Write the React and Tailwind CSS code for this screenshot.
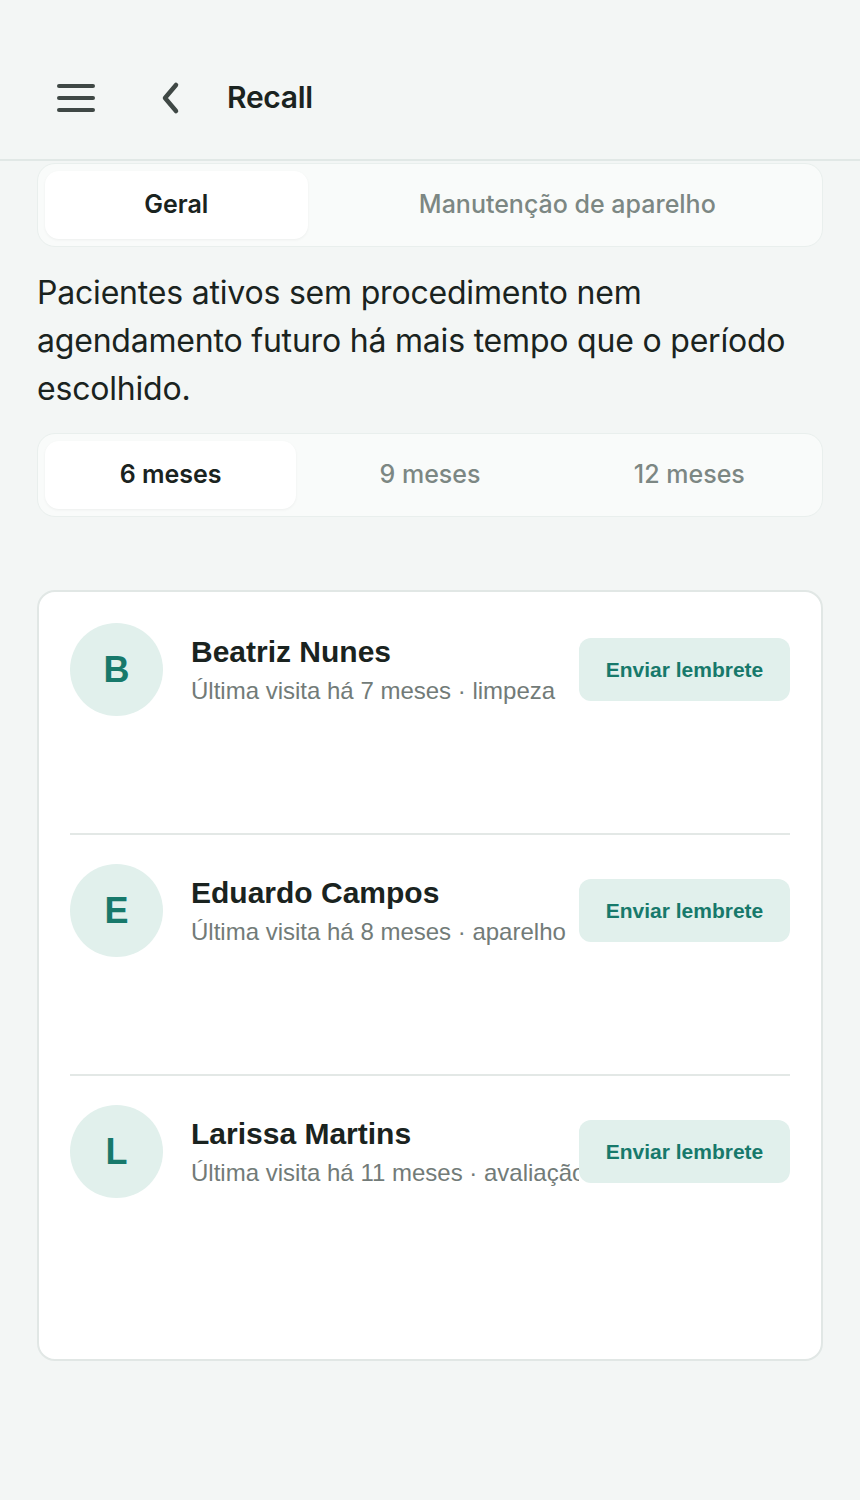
import { useState } from "react"

const patients = [
  { initial: "B", name: "Beatriz Nunes", info: "Última visita há 7 meses · limpeza" },
  { initial: "E", name: "Eduardo Campos", info: "Última visita há 8 meses · aparelho" },
  { initial: "L", name: "Larissa Martins", info: "Última visita há 11 meses · avaliação" },
]

export default function App() {
  const [tab, setTab] = useState("geral")
  const [period, setPeriod] = useState(6)

  return (
    <div className="min-h-[1500px] bg-[#f3f6f5] font-['Inter',sans-serif] text-[#1a2320]">
      <header className="h-[161px] flex items-center px-[57px] pt-[36px] border-b-2 border-[#e1e8e6]">
        <button className="w-[38px] h-[28px] flex flex-col justify-between">
          <span className="block h-[4px] rounded-full bg-[#3f4845]" />
          <span className="block h-[4px] rounded-full bg-[#3f4845]" />
          <span className="block h-[4px] rounded-full bg-[#3f4845]" />
        </button>
        <button className="ml-[66px]">
          <svg width="20" height="34" viewBox="0 0 20 34" fill="none">
            <path d="M15 4 L4 17 L15 30" stroke="#3f4845" strokeWidth="4.5" strokeLinecap="round" strokeLinejoin="round" />
          </svg>
        </button>
        <h1 className="ml-[46px] text-[30px] font-semibold tracking-[-0.3px] text-[#1a2320]">Recall</h1>
      </header>

      <div className="px-[37px]">
        <div className="mt-[2px] flex gap-3 p-[7px] rounded-[18px] bg-[#f9fbfa] border border-[#e9efed]">
          {[["geral", "Geral"], ["manut", "Manutenção de aparelho"]].map(([k, label]) => (
            <button
              key={k}
              onClick={() => setTab(k)}
              className={`flex-auto h-[68px] rounded-[14px] text-[25px] ${
                tab === k ? "bg-white font-semibold text-[#1a2320] shadow-[0_1px_3px_rgba(0,0,0,0.05)]" : "font-medium text-[#7c8783]"
              }`}
            >
              {label}
            </button>
          ))}
        </div>

        <p className="mt-[22px] text-[32px] leading-[48px] text-[#1a2320] tracking-[-0.2px]">
          Pacientes ativos sem procedimento nem agendamento futuro há mais tempo que o período escolhido.
        </p>

        <div className="mt-[20px] flex gap-2 p-[7px] rounded-[18px] bg-[#f9fbfa] border border-[#e9efed]">
          {[6, 9, 12].map((m) => (
            <button
              key={m}
              onClick={() => setPeriod(m)}
              className={`flex-1 h-[68px] rounded-[14px] text-[25px] ${
                period === m ? "bg-white font-semibold text-[#1a2320] shadow-[0_1px_3px_rgba(0,0,0,0.05)]" : "font-medium text-[#7c8783]"
              }`}
            >
              {m} meses
            </button>
          ))}
        </div>

        <div className="mt-[73px] bg-white rounded-[18px] border-2 border-[#e1e7e5] px-[31px] pb-[44px] font-['Liberation_Sans',Arial,sans-serif]">
          {patients.map((p, i) => (
            <div key={p.name} className={`h-[241px] ${i > 0 ? "pt-[29px] border-t-2 border-[#e3e8e6]" : "pt-[31px]"}`}>
              <div className="flex items-center">
                <div className="w-[93px] h-[93px] shrink-0 rounded-full bg-[#e1f0ec] flex items-center justify-center text-[36px] font-bold text-[#17796b]">
                  {p.initial}
                </div>
                <div className="ml-[28px] flex-1 min-w-0 overflow-hidden whitespace-nowrap">
                  <p className="text-[30px] leading-[36px] font-bold text-[#1a2320]">{p.name}</p>
                  <p className="mt-[6px] text-[24px] leading-[30px] text-[#727b78]">{p.info}</p>
                </div>
                <button className="shrink-0 w-[211px] h-[63px] rounded-[12px] bg-[#e1f0ec] text-[21px] font-bold text-[#17796b]">
                  Enviar lembrete
                </button>
              </div>
            </div>
          ))}
        </div>
      </div>
    </div>
  )
}
